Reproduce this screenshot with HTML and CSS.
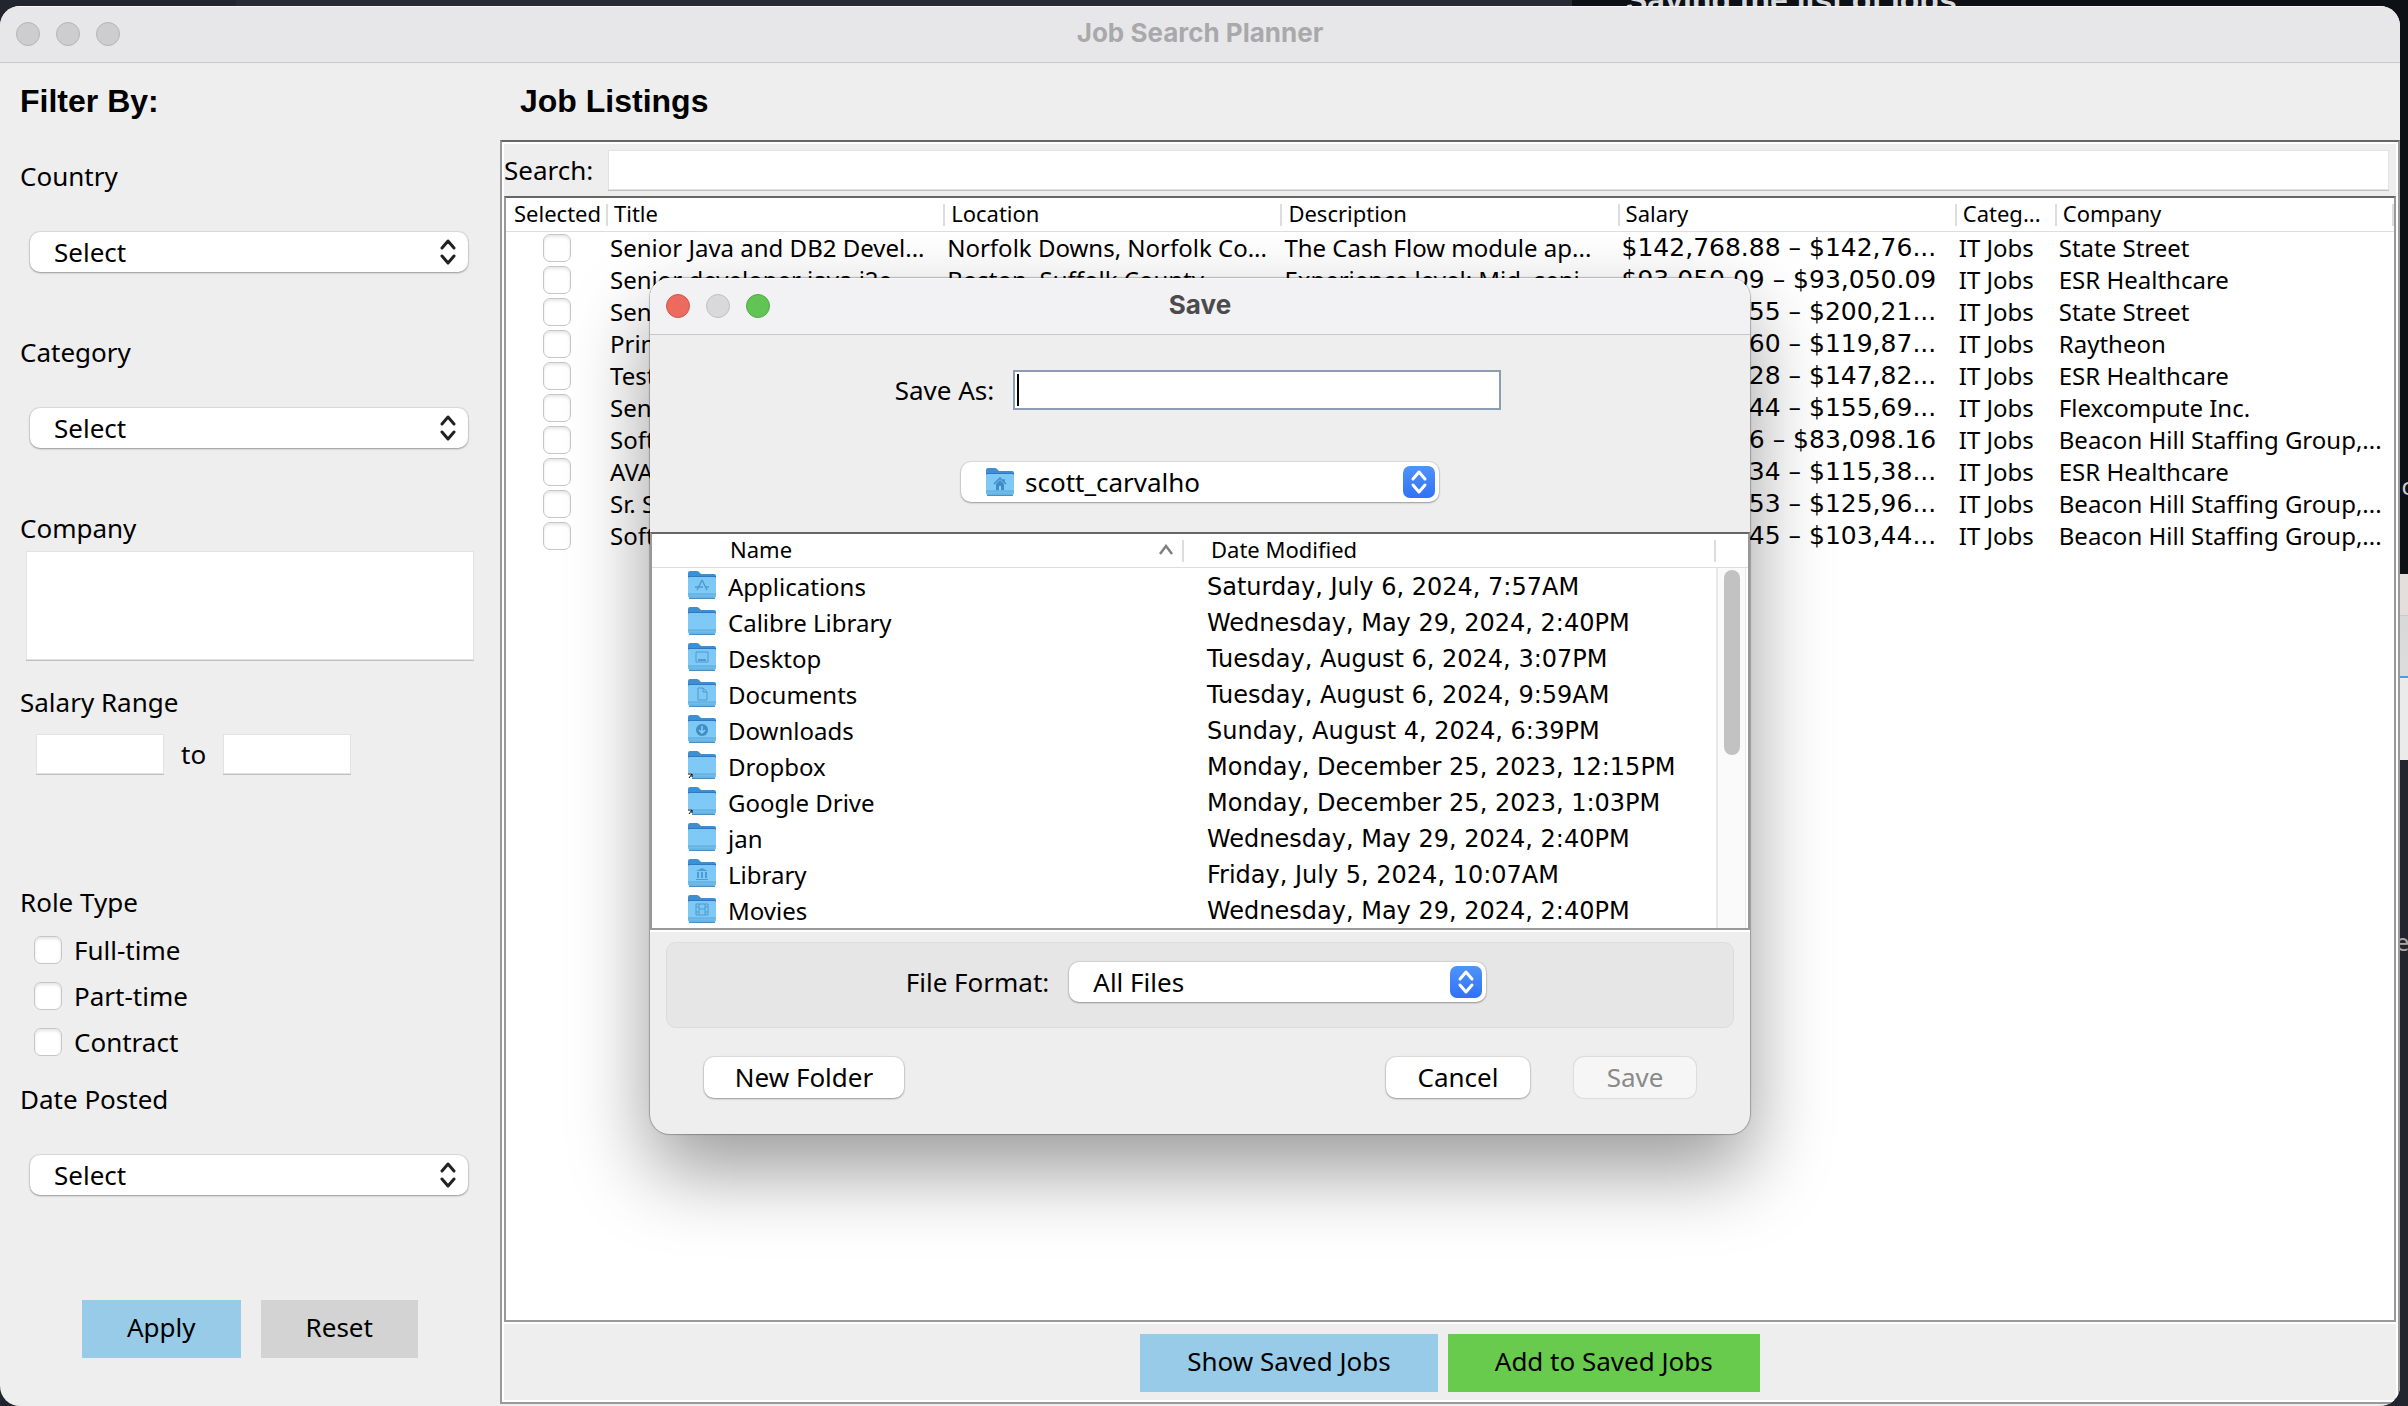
FILE: index.html
```html
<!DOCTYPE html>
<html lang="en">
<head>
<meta charset="utf-8">
<title>Job Search Planner</title>
<link rel="stylesheet" href="styles.css">
</head>
<body>
<svg class="defs" aria-hidden="true">
  <defs>
    <linearGradient id="folder-front" x1="0" y1="0" x2="0" y2="1">
      <stop offset="0" stop-color="#7cc8f6"/>
      <stop offset="0.75" stop-color="#80c9f5"/>
      <stop offset="1" stop-color="#5fb1e4"/>
    </linearGradient>
    <linearGradient id="badge-blue" x1="0" y1="0" x2="0" y2="1">
      <stop offset="0" stop-color="#4f94f9"/>
      <stop offset="1" stop-color="#2f72f6"/>
    </linearGradient>
    <symbol id="folder" viewBox="0 0 30 30">
      <path d="M1 3q0-2 2-2h7q1 0 2 1l2 2h13q2 0 2 2v6H1z" fill="#3f8fd0"/>
      <path d="M1 6h28v3H1z" fill="#2f78c4"/>
      <path d="M1 8q0-1 2-1h24q2 0 2 1v18q0 2-2 2H3q-2 0-2-2z" fill="url(#folder-front)"/>
      <path d="M1 24h28" stroke="#5aa9dc" stroke-width="1"/>
      <path d="M2 28.500h26" stroke="#4b8fbf" stroke-width="1"/>
    </symbol>
    <symbol id="chevrons" viewBox="0 0 16 26">
      <path d="M2 9l6-7 6 7M2 17l6 7 6-7" fill="none" stroke="currentColor" stroke-width="3" stroke-linecap="round" stroke-linejoin="round"/>
    </symbol>
    <symbol id="badge" viewBox="0 0 32 32">
      <rect width="32" height="32" rx="7" fill="url(#badge-blue)"/>
      <path d="M10 13l6-7 6 7M10 19l6 7 6-7" fill="none" stroke="#fff" stroke-width="3" stroke-linecap="round" stroke-linejoin="round"/>
    </symbol>
    <symbol id="alias" viewBox="0 0 30 30">
      <path d="M1 23h4v6H1z" fill="#fff"/>
      <path d="M1 24h4v3M5 24l-3 4" fill="none" stroke="#000" stroke-width="1"/>
    </symbol>
  </defs>
</svg>

<div class="backdrop" aria-hidden="true">
  <div class="back-editor"></div>
  <div class="back-page"><span class="back-heading">Saving the list of jobs</span><span class="back-line">c</span></div>
  <div class="back-card"></div>
  <div class="back-code"><span class="back-line">ep</span></div>
</div>

<div class="window">
  <header class="titlebar">
    <div class="lights"><i class="light"></i><i class="light"></i><i class="light"></i></div>
    <h1 class="titlebar-text">Job Search Planner</h1>
  </header>

  <div class="content">
    <form class="filters">
      <h2 class="heading">Filter By:</h2>
      <div class="field">
        <label class="label" for="country">Country</label>
        <div class="combo">
          <select id="country" class="select"><option>Select</option></select>
          <svg class="combo-arrows"><use href="#chevrons"/></svg>
        </div>
      </div>
      <div class="field">
        <label class="label" for="category">Category</label>
        <div class="combo">
          <select id="category" class="select"><option>Select</option></select>
          <svg class="combo-arrows"><use href="#chevrons"/></svg>
        </div>
      </div>
      <div class="field">
        <label class="label" for="company">Company</label>
        <textarea id="company" class="textbox company"></textarea>
      </div>
      <div class="field field-salary">
        <label class="label" for="salary-from">Salary Range</label>
        <div class="range">
          <input id="salary-from" class="textbox range-box" type="text">
          <label class="label" for="salary-to">to</label>
          <input id="salary-to" class="textbox range-box" type="text">
        </div>
      </div>
      <div class="field field-role">
        <span class="label">Role Type</span>
        <div class="checks">
          <label class="check"><input class="tick" type="checkbox">Full-time</label>
          <label class="check"><input class="tick" type="checkbox">Part-time</label>
          <label class="check"><input class="tick" type="checkbox">Contract</label>
        </div>
      </div>
      <div class="field field-date">
        <label class="label" for="posted">Date Posted</label>
        <div class="combo">
          <select id="posted" class="select"><option>Select</option></select>
          <svg class="combo-arrows"><use href="#chevrons"/></svg>
        </div>
      </div>
      <div class="filter-actions">
        <button class="flat blue" type="button">Apply</button>
        <button class="flat grey" type="button">Reset</button>
      </div>
    </form>

    <main class="listings">
      <h2 class="heading listings-heading">Job Listings</h2>
      <section class="panel">
        <div class="search">
          <label class="label" for="search">Search:</label>
          <input id="search" class="textbox search-box" type="text">
        </div>
        <div class="jobs-frame">
          <table class="jobs">
            <colgroup><col class="col-selected"><col><col><col><col><col class="col-category"><col></colgroup>
            <thead>
              <tr><th>Selected</th><th>Title</th><th>Location</th><th>Description</th><th>Salary</th><th>Categ...</th><th>Company</th></tr>
            </thead>
            <tbody>
              <tr><td><input class="tick" type="checkbox" aria-label="Select job 1"></td><td>Senior Java and DB2 Devel...</td><td>Norfolk Downs, Norfolk Co...</td><td>The Cash Flow module ap...</td><td class="money">$142,768.88 – $142,76...</td><td>IT Jobs</td><td>State Street</td></tr>
              <tr><td><input class="tick" type="checkbox" aria-label="Select job 2"></td><td>Senior developer java j2e...</td><td>Boston, Suffolk County</td><td>Experience level: Mid, seni...</td><td class="money">$93,050.09 – $93,050.09</td><td>IT Jobs</td><td>ESR Healthcare</td></tr>
              <tr><td><input class="tick" type="checkbox" aria-label="Select job 3"></td><td>Senior</td><td></td><td></td><td class="money">$200,211.55 – $200,21...</td><td>IT Jobs</td><td>State Street</td></tr>
              <tr><td><input class="tick" type="checkbox" aria-label="Select job 4"></td><td>Principal</td><td></td><td></td><td class="money">$119,871.60 – $119,87...</td><td>IT Jobs</td><td>Raytheon</td></tr>
              <tr><td><input class="tick" type="checkbox" aria-label="Select job 5"></td><td>Test</td><td></td><td></td><td class="money">$147,821.28 – $147,82...</td><td>IT Jobs</td><td>ESR Healthcare</td></tr>
              <tr><td><input class="tick" type="checkbox" aria-label="Select job 6"></td><td>Senior</td><td></td><td></td><td class="money">$155,691.44 – $155,69...</td><td>IT Jobs</td><td>Flexcompute Inc.</td></tr>
              <tr><td><input class="tick" type="checkbox" aria-label="Select job 7"></td><td>Software</td><td></td><td></td><td class="money">$83,098.16 – $83,098.16</td><td>IT Jobs</td><td>Beacon Hill Staffing Group,...</td></tr>
              <tr><td><input class="tick" type="checkbox" aria-label="Select job 8"></td><td>AVA</td><td></td><td></td><td class="money">$115,381.34 – $115,38...</td><td>IT Jobs</td><td>ESR Healthcare</td></tr>
              <tr><td><input class="tick" type="checkbox" aria-label="Select job 9"></td><td>Sr. Software</td><td></td><td></td><td class="money">$125,961.53 – $125,96...</td><td>IT Jobs</td><td>Beacon Hill Staffing Group,...</td></tr>
              <tr><td><input class="tick" type="checkbox" aria-label="Select job 10"></td><td>Software</td><td></td><td></td><td class="money">$103,441.45 – $103,44...</td><td>IT Jobs</td><td>Beacon Hill Staffing Group,...</td></tr>
            </tbody>
          </table>
        </div>
        <div class="panel-actions">
          <button class="flat blue wide" type="button">Show Saved Jobs</button>
          <button class="flat green wide" type="button">Add to Saved Jobs</button>
        </div>
      </section>
    </main>
  </div>

  <div class="dialog" role="dialog" aria-labelledby="dialog-title">
    <header class="titlebar dialog-bar">
      <div class="lights"><i class="light red"></i><i class="light pale"></i><i class="light lime"></i></div>
      <h2 class="titlebar-text" id="dialog-title">Save</h2>
    </header>
    <div class="save-as">
      <label class="label" for="file-name">Save As:</label>
      <div class="name-wrap">
        <input id="file-name" class="name-box" type="text">
        <span class="caret"></span>
      </div>
    </div>
    <div class="combo folder-combo">
      <svg class="combo-folder" viewBox="0 0 30 30">
        <use href="#folder"/>
        <path d="M9 17l6-6 6 6M19 12v3" fill="none" stroke="#3f8dc4" stroke-width="1.500"/>
        <path d="M11 17l4-4 4 4v6h-8z" fill="#3f8dc4"/><path d="M14 19h2v4h-2z" fill="#8fd0f7"/>
      </svg>
      <select class="select folder-select" aria-label="Folder"><option>scott_carvalho</option></select>
      <svg class="combo-badge"><use href="#badge"/></svg>
    </div>

    <div class="files-frame">
      <table class="files">
        <colgroup><col><col><col class="col-scroll"></colgroup>
        <thead>
          <tr>
            <th><div class="sort">Name <svg class="sort-arrow" viewBox="0 0 16 12"><path d="M2 10l6-8 6 8" fill="none" stroke="#808080" stroke-width="2.500"/></svg></div></th>
            <th>Date Modified</th><th></th>
          </tr>
        </thead>
        <tbody>
          <tr><td><div class="file"><svg class="icon" viewBox="0 0 30 30"><use href="#folder"/><path d="M15 10l-5 10M15 10l5 10M8 17h8M19 17h3" fill="none" stroke="#4d9bd0" stroke-width="1.500"/></svg>Applications</div></td><td>Saturday, July 6, 2024, 7:57AM</td><td></td></tr>
          <tr><td><div class="file"><svg class="icon"><use href="#folder"/></svg>Calibre Library</div></td><td>Wednesday, May 29, 2024, 2:40PM</td><td></td></tr>
          <tr><td><div class="file"><svg class="icon" viewBox="0 0 30 30"><use href="#folder"/><path d="M9 10h12v10H9z" fill="none" stroke="#4d9bd0"/><path d="M11 17h8v2h-8z" fill="#4d9bd0"/></svg>Desktop</div></td><td>Tuesday, August 6, 2024, 3:07PM</td><td></td></tr>
          <tr><td><div class="file"><svg class="icon" viewBox="0 0 30 30"><use href="#folder"/><path d="M11 10h5l4 4v8h-9zM16 10v4h4" fill="none" stroke="#4d9bd0"/></svg>Documents</div></td><td>Tuesday, August 6, 2024, 9:59AM</td><td></td></tr>
          <tr><td><div class="file"><svg class="icon" viewBox="0 0 30 30"><use href="#folder"/><circle cx="15" cy="16" r="6" fill="#3f8dc4"/><path d="M15 12v7M12 16l3 3 3-3" fill="none" stroke="#8fd0f7" stroke-width="1.500"/></svg>Downloads</div></td><td>Sunday, August 4, 2024, 6:39PM</td><td></td></tr>
          <tr><td><div class="file"><svg class="icon"><use href="#folder"/><use href="#alias"/></svg>Dropbox</div></td><td>Monday, December 25, 2023, 12:15PM</td><td></td></tr>
          <tr><td><div class="file"><svg class="icon"><use href="#folder"/><use href="#alias"/></svg>Google Drive</div></td><td>Monday, December 25, 2023, 1:03PM</td><td></td></tr>
          <tr><td><div class="file"><svg class="icon"><use href="#folder"/></svg>jan</div></td><td>Wednesday, May 29, 2024, 2:40PM</td><td></td></tr>
          <tr><td><div class="file"><svg class="icon" viewBox="0 0 30 30"><use href="#folder"/><path d="M9 13l6-3 6 3zM9 21h12v1H9zM10 14h2v6h-2zM14 14h2v6h-2zM18 14h2v6h-2z" fill="#4d9bd0"/></svg>Library</div></td><td>Friday, July 5, 2024, 10:07AM</td><td></td></tr>
          <tr><td><div class="file"><svg class="icon" viewBox="0 0 30 30"><use href="#folder"/><path d="M9 10h12v11H9zM12 10v11M18 10v11M12 15h6M9 13h3M9 18h3M18 13h3M18 18h3" fill="none" stroke="#4d9bd0"/></svg>Movies</div></td><td>Wednesday, May 29, 2024, 2:40PM</td><td></td></tr>
        </tbody>
      </table>
      <div class="scrollbar"><div class="thumb"></div></div>
    </div>

    <div class="format">
      <label class="label" for="format">File Format:</label>
      <div class="combo format-combo">
        <select id="format" class="select"><option>All Files</option></select>
        <svg class="combo-badge"><use href="#badge"/></svg>
      </div>
    </div>
    <div class="dialog-actions">
      <button class="push new-folder" type="button">New Folder</button>
      <button class="push cancel" type="button">Cancel</button>
      <button class="push save" type="button" disabled>Save</button>
    </div>
  </div>
</div>
</body>
</html>
```

FILE: styles.css
```css
* { box-sizing: border-box; }

body {
  margin: 0;
  min-height: 100vh;
  display: flex;
  position: relative;
  overflow: hidden;
  background: #23252e;
  color: #000;
  font: 26px/32px "Noto Sans", sans-serif;
}

input, select, textarea, button { font: inherit; color: inherit; margin: 0; }
.defs { position: absolute; width: 0; height: 0; }

/* Other windows that show round the edges of this one */
.backdrop { position: absolute; inset: 0; overflow: hidden; }
.back-editor { position: absolute; left: 236px; top: 0; width: 1336px; height: 40px; background: #282a34; }
.back-page { position: absolute; left: 1572px; right: 0; top: 0; height: 574px; background: #0d1015; color: #d8dade; }
.back-heading { position: absolute; left: 54px; top: -16px; font: bold 32px/32px "Liberation Sans", sans-serif; }
.back-line { position: absolute; right: -5px; top: 470px; font-size: 24px; color: #c8ccd2; }
.back-card { position: absolute; right: 0; top: 574px; width: 40px; height: 186px; background: linear-gradient(#e4dedc 41px, #bbb 41px, #d9d9d9 42px, #dcdcdc 102px, #4a9be8 102px, #4a9be8 104px, #ebebeb 104px); }
.back-code { position: absolute; right: 0; top: 760px; width: 40px; bottom: 0; background: #23252e; }
.back-code .back-line { top: 166px; right: -16px; color: #a8a8a8; }

.window {
  position: relative;
  flex: 1;
  display: flex;
  flex-direction: column;
  margin: 6px 8px 0 0;
  border-radius: 20px;
  background: #eee;
  overflow: hidden;
}

.titlebar {
  display: grid;
  grid-template-columns: 1fr auto 1fr;
  align-items: center;
  height: 57px;
  padding: 0 16px;
  background: #e7e7e9;
  border-bottom: 1px solid #c8c8ca;
  box-shadow: inset 0 1px #f8f8f9;
  color: #a9a9ab;
}
.titlebar-text { margin: 0; padding-bottom: 2px; font: 700 26px/32px Inter, sans-serif; }
.lights { display: flex; gap: 16px; }
.light { width: 24px; height: 24px; border-radius: 50%; background: #cdcdcf; border: 1px solid #b4b4b6; }
.red { background: #ed6a5e; border-color: #d35549; }
.pale { background: #d9d9db; border-color: #c0c0c2; }
.lime { background: #61c454; border-color: #50a945; }

.content { flex: 1; display: flex; }
.heading { margin: 0; font: bold 32px/36px "Liberation Sans", Arial, sans-serif; }
.label { display: block; white-space: nowrap; }

/* Filter column */
.filters { width: 500px; padding: 20px 27px 0 20px; }
.field { margin-top: 64px; }
.heading + .field { margin-top: 41px; }
.combo { display: grid; align-items: center; }
.combo > * { grid-row: 1; grid-column: 1; }
.field .combo { margin: 40px 5px 0 10px; }
.select {
  appearance: none;
  width: 100%;
  height: 40px;
  padding: 0 24px;
  border: 0;
  border-radius: 10px;
  background: #fff;
  box-shadow: 0 0 1px 1px rgba(0, 0, 0, .08), 0 1px 2px rgba(0, 0, 0, .3);
}
.combo-arrows { width: 16px; height: 26px; justify-self: end; margin-right: 12px; color: #222; pointer-events: none; }
.combo-badge { width: 32px; height: 32px; justify-self: end; margin-right: 4px; pointer-events: none; }
.textbox {
  display: block;
  height: 38px;
  padding: 0 4px;
  border: 0;
  border-radius: 0;
  background: #fff;
  box-shadow: 0 0 0 1px #e2e2e2, 0 1px 0 1px #c0c0c0;
  resize: none;
  outline: 0;
}
.company { width: 446px; height: 107px; margin: 8px 0 0 7px; }
.field-salary { margin-top: 27px; }
.range { display: flex; align-items: center; gap: 18px; margin: 17px 0 0 17px; }
.range-box { width: 126px; }
.field-role { margin-top: 113px; }
.checks { display: grid; margin: 9px 0 0 14px; }
.check { display: flex; align-items: center; gap: 12px; height: 46px; }
.tick {
  appearance: none;
  display: block;
  width: 28px;
  height: 28px;
  border: 1px solid #c6c6c6;
  border-radius: 7px;
  background: #fff;
  box-shadow: inset 0 2px 3px rgba(0, 0, 0, .1);
}
.field-date { margin-top: 18px; }
.filter-actions { display: flex; gap: 20px; margin: 105px 0 0 62px; }

.flat { height: 58px; padding: 0 45px 4px; border: 0; }
.blue { background: #97cbe8; }
.grey { background: #d3d3d3; }
.green { background: #68cb4d; }
.wide { padding: 0 47px 4px; }

/* Listings */
.listings { flex: 1; display: flex; flex-direction: column; padding: 20px 0 2px; }
.listings-heading { margin: 0 0 21px 20px; }
.panel {
  flex: 1;
  display: flex;
  flex-direction: column;
  border: 2px solid #999;
  border-top-color: #666;
  padding: 2px;
  box-shadow: inset 0 0 0 2px #fff;
}
.search { display: flex; align-items: center; gap: 16px; height: 52px; padding-right: 8px; }
.search-box { flex: 1; }
.jobs-frame { flex: 1; border: 2px solid #999; border-top-color: #666; background: #fff; box-shadow: 0 2px #fff; }
table { border-collapse: collapse; table-layout: fixed; width: 100%; }
th { padding: 0 0 2px 6px; text-align: left; white-space: nowrap; font-weight: 400; font-size: 22px; line-height: 31px; border-bottom: 1px solid #dedede; background: linear-gradient(#ddd, #ddd) right 0 top 6px / 2px 22px no-repeat; }
td { padding: 0 0 0 2px; height: 32px; white-space: nowrap; overflow: hidden; font-size: 24px; }
.col-selected { width: 102px; }
.col-category { width: 100px; }
.jobs th:first-child { padding-left: 8px; }
.jobs td:first-child { padding-left: 0; }
.jobs .tick { margin: 0 auto; }
.jobs .money { font-family: "DejaVu Sans", sans-serif; font-size: 25px; }
.panel-actions { display: flex; justify-content: center; gap: 10px; padding: 12px 0 8px; }

/* Save dialog */
.dialog {
  position: absolute;
  top: 272px;
  left: 50%;
  width: 1100px;
  margin-left: -550px;
  padding-bottom: 36px;
  border-radius: 20px;
  background: #eee;
  box-shadow: 0 0 1px 1px rgba(0, 0, 0, .25), 0 36px 80px rgba(0, 0, 0, .4);
}
.dialog-bar { border-radius: 20px 20px 0 0; background: #f2f1f4; color: #4b4b4d; }
.save-as { display: flex; justify-content: center; align-items: center; gap: 19px; margin-top: 35px; padding-right: 4px; }
.name-wrap { position: relative; }
.name-box { display: block; width: 488px; height: 40px; padding: 0 6px; border: 2px solid #8c9db3; background: #fff; outline: 0; }
.caret { position: absolute; left: 4px; top: 4px; width: 2px; height: 32px; background: #000; }
.folder-combo { width: 478px; margin: 52px auto 30px; }
.folder-select { padding-left: 64px; }
.combo-folder { width: 30px; height: 30px; margin-left: 24px; z-index: 1; pointer-events: none; }

.files-frame { position: relative; border: 2px solid #999; border-top-color: #666; background: #fff; box-shadow: 0 2px #fff; }
.files td { height: 36px; padding: 2px 0 0 23px; font-family: "DejaVu Sans", sans-serif; }
.files td:first-child { padding-left: 35px; font-family: inherit; }
.files th { padding-left: 27px; }
.files th:first-child { padding-left: 78px; }
.files th:last-child { background: none; }
.col-scroll { width: 32px; }
.sort { display: flex; justify-content: space-between; align-items: center; padding-right: 10px; }
.sort-arrow { width: 16px; height: 12px; }
.file { display: flex; align-items: center; gap: 11px; }
.icon { width: 30px; height: 30px; margin-bottom: 4px; }
.scrollbar { position: absolute; right: 2px; top: 34px; bottom: 0; width: 30px; padding: 2px 6px; background: #fafafa; border: solid #e8e8e8; border-width: 0 1px 0 2px; }
.thumb { width: 16px; height: 185px; border-radius: 8px; background: #c2c2c2; }

.format {
  display: flex;
  justify-content: center;
  align-items: center;
  gap: 20px;
  height: 86px;
  margin: 12px 16px 29px;
  padding: 0 8px 6px 0;
  border: 1px solid #dcdcdc;
  border-radius: 10px;
  background: #e6e6e6;
}
.format-combo { width: 417px; }
.dialog-actions { display: flex; padding: 0 54px; }
.push { height: 41px; padding: 0 0 2px; border: 0; border-radius: 10px; background: #fff; box-shadow: 0 0 1px 1px rgba(0, 0, 0, .08), 0 1px 2px rgba(0, 0, 0, .3); }
.new-folder { width: 200px; margin-right: auto; }
.cancel { width: 144px; margin-right: 44px; }
.save { width: 122px; background: #f6f6f6; color: #8a8a8a; box-shadow: 0 0 1px 1px rgba(0, 0, 0, .08); }
```
